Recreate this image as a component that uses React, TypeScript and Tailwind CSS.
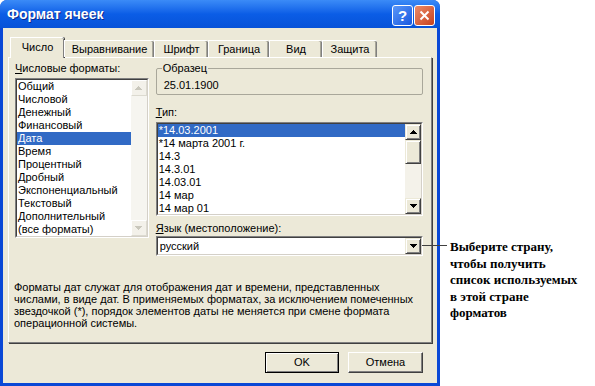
import React from "react";

const sans = "[font-family:'Liberation_Sans',Arial,sans-serif]";

function Arrow({ dir, color = "#000" }: { dir: "up" | "down"; color?: string }) {
  return (
    <svg width="7" height="4" viewBox="0 0 7 4" shapeRendering="crispEdges">
      <path d={dir === "up" ? "M3 0h1v1h1v1h1v1h1v1H0V3h1V2h1V1h1z" : "M0 0h7v1H6v1H5v1H4v1H3V3H2V2H1V1H0z"} fill={color} />
    </svg>
  );
}

function ScrollBtn({ dir }: { dir: "up" | "down" }) {
  return (
    <div className="flex h-[16px] w-[16px] items-center justify-center border border-t-[#ECE9D8] border-l-[#ECE9D8] border-r-[#404040] border-b-[#404040] bg-[#ECE9D8] shadow-[inset_1px_1px_0_white,inset_-1px_-1px_0_#808080]">
      <Arrow dir={dir} />
    </div>
  );
}

function DisabledBtn({ dir }: { dir: "up" | "down" }) {
  return (
    <div className="flex h-[16px] w-[16px] items-center justify-center border border-t-white border-l-white border-r-[#DCDAD0] border-b-[#DCDAD0] bg-[#F3F1EA]">
      <Arrow dir={dir} color="#C9C7BC" />
    </div>
  );
}

const formats = [
  "Общий",
  "Числовой",
  "Денежный",
  "Финансовый",
  "Дата",
  "Время",
  "Процентный",
  "Дробный",
  "Экспоненциальный",
  "Текстовый",
  "Дополнительный",
  "(все форматы)",
];

const types = ["*14.03.2001", "*14 марта 2001 г.", "14.3", "14.3.01", "14.03.01", "14 мар", "14 мар 01"];

const tabs = [
  { label: "Число", w: "w-[54px]", active: true },
  { label: "Выравнивание", w: "w-[90px]", active: false },
  { label: "Шрифт", w: "w-[54px]", active: false },
  { label: "Граница", w: "w-[61px]", active: false },
  { label: "Вид", w: "w-[53px]", active: false },
  { label: "Защита", w: "w-[55px]", active: false },
];

export default function App() {
  return (
    <div className={`flex h-[386px] w-[595px] bg-white text-black ${sans}`}>
      {/* dialog window */}
      <div className="flex h-[386px] w-[440px] shrink-0 flex-col rounded-t-[7px] bg-[#0A48D6]">
        <div className="flex h-[28px] items-center rounded-t-[7px] bg-linear-to-b from-[#3B8BF7] via-[#0B5DE6] to-[#0752D8] pl-[7px] pr-[5px]">
          <span className="flex-1 text-[14px] font-bold text-white [text-shadow:1px_1px_0_#0B2A8F]">Формат ячеек</span>
          <div className="mt-[2px] flex gap-[1px]">
            <div className="flex h-[21px] w-[21px] items-center justify-center rounded-[3px] border border-white bg-linear-to-br from-[#5A97F8] to-[#1756DF] text-[15px] font-bold leading-none text-white">
              ?
            </div>
            <div className="flex h-[21px] w-[21px] items-center justify-center rounded-[3px] border border-white bg-linear-to-br from-[#EC8A66] to-[#C6401C]">
              <svg width="11" height="11" viewBox="0 0 11 11">
                <path d="M1.5 1.5l8 8M9.5 1.5l-8 8" stroke="white" strokeWidth="2" />
              </svg>
            </div>
          </div>
        </div>

        <div className="mx-[3px] mb-[3px] flex flex-1 flex-col bg-[#ECE9D8] pt-[9px]">
          {/* tabs */}
          <div className="relative z-10 flex h-[20px] items-end pl-[7px] text-[11px]">
            {tabs.map((t) =>
              t.active ? (
                <div
                  key={t.label}
                  className={`${t.w} mb-[-1px] flex h-[21px] items-center justify-center rounded-tr-[2px] border-l border-t border-white bg-[#ECE9D8] pb-[1px] shadow-[inset_-1px_0_0_#808080,1px_0_0_#404040]`}
                >
                  {t.label}
                </div>
              ) : (
                <div
                  key={t.label}
                  className={`${t.w} flex h-[17px] items-center justify-center rounded-tr-[2px] border-l border-t border-white bg-[#ECE9D8] shadow-[inset_-1px_0_0_#808080,inset_-2px_0_0_#A8A699]`}
                >
                  {t.label}
                </div>
              )
            )}
          </div>

          {/* panel */}
          <div className="mx-[5px] flex h-[286px] flex-col border border-b-[#808080] border-l-white border-r-[#808080] border-t-white pl-[6px] pr-[8px] pt-[4px] text-[11px] shadow-[1px_1px_0_#404040]">
            <div className="flex gap-[7px]">
              <div className="flex w-[134px] flex-col">
                <div className="h-[13px] leading-[13px]">
                  <u>Ч</u>исловые форматы:
                </div>
                <div className="mt-[3px] h-[160px] border border-b-white border-l-[#808080] border-r-white border-t-[#808080]">
                  <div className="flex h-full border border-b-[#D4D0C8] border-l-[#404040] border-r-[#D4D0C8] border-t-[#404040] bg-white">
                    <div className="flex flex-1 flex-col">
                      {formats.map((f) => (
                        <div
                          key={f}
                          className={
                            f === "Дата"
                              ? "h-[13px] whitespace-nowrap bg-[#316AC5] pl-[1px] leading-[13px] text-white"
                              : "h-[13px] whitespace-nowrap pl-[1px] leading-[13px]"
                          }
                        >
                          {f}
                        </div>
                      ))}
                    </div>
                    <div className="flex w-[16px] flex-col bg-[#F6F5F0]">
                      <DisabledBtn dir="up" />
                      <div className="flex-1" />
                      <DisabledBtn dir="down" />
                    </div>
                  </div>
                </div>
              </div>

              <div className="flex w-[268px] flex-col">
                <fieldset className="rounded-[2px] border border-[#A9A79A] pb-[2px]">
                  <legend className="ml-[5px] px-[1px] leading-[13px]">Образец</legend>
                  <div className="pl-[7px] pt-[4px] leading-[13px]">25.01.1900</div>
                </fieldset>

                <div className="mt-[11px] h-[13px] leading-[13px]">
                  <u>Т</u>ип:
                </div>
                <div className="mt-[3px] h-[94px] border border-b-white border-l-[#808080] border-r-white border-t-[#808080]">
                  <div className="flex h-full border border-b-[#D4D0C8] border-l-[#404040] border-r-[#D4D0C8] border-t-[#404040] bg-white">
                    <div className="flex flex-1 flex-col overflow-hidden">
                      {types.map((t, i) => (
                        <div
                          key={t}
                          className={
                            i === 0
                              ? "h-[13px] shrink-0 whitespace-nowrap bg-[#316AC5] pl-[1px] leading-[13px] text-white"
                              : "h-[13px] shrink-0 whitespace-nowrap pl-[1px] leading-[13px]"
                          }
                        >
                          {t}
                        </div>
                      ))}
                    </div>
                    <div className="flex w-[16px] flex-col bg-[#F4F2EA]">
                      <ScrollBtn dir="up" />
                      <div className="h-[24px] border border-b-[#404040] border-l-[#ECE9D8] border-r-[#404040] border-t-[#ECE9D8] bg-[#ECE9D8] shadow-[inset_1px_1px_0_white,inset_-1px_-1px_0_#808080]" />
                      <div className="flex-1" />
                      <ScrollBtn dir="down" />
                    </div>
                  </div>
                </div>

                <div className="mt-[6px] h-[13px] leading-[13px]">
                  <u>Я</u>зык (местоположение):
                </div>
                <div className="relative mt-[1px] h-[20px] border border-b-white border-l-[#808080] border-r-white border-t-[#808080]">
                  <div className="flex h-full items-center border border-b-[#D4D0C8] border-l-[#404040] border-r-[#D4D0C8] border-t-[#404040] bg-white">
                    <span className="flex-1 pl-[2px]">русский</span>
                    <ScrollBtn dir="down" />
                  </div>
                  <div className="absolute left-full top-[8px] h-px w-[25px] bg-[#404040]" />
                </div>
              </div>
            </div>

            <p className="ml-[-1px] mt-[25px] leading-[12px]">
              Форматы дат служат для отображения дат и времени, представленных
              <br />
              числами, в виде дат. В применяемых форматах, за исключением помеченных
              <br />
              звездочкой (*), порядок элементов даты не меняется при смене формата
              <br />
              операционной системы.
            </p>
          </div>

          {/* buttons */}
          <div className="mt-[9px] flex justify-end gap-[9px] pr-[14px] text-[11px]">
            <button className="flex h-[21px] w-[74px] items-center justify-center border border-black bg-[#ECE9D8] shadow-[inset_1px_1px_0_white,inset_-1px_-1px_0_#808080]">
              OK
            </button>
            <button className="flex h-[21px] w-[75px] items-center justify-center border border-b-[#404040] border-l-white border-r-[#404040] border-t-white bg-[#ECE9D8] shadow-[inset_-1px_-1px_0_#808080]">
              Отмена
            </button>
          </div>
        </div>
      </div>

      {/* callout */}
      <div className="pl-[10px] pt-[239px] text-[13px] font-bold leading-[16.5px] [font-family:'Liberation_Serif','Times_New_Roman',serif]">
        <div>Выберите страну,</div>
        <div>чтобы получить</div>
        <div>список используемых</div>
        <div>в этой стране</div>
        <div>форматов</div>
      </div>
    </div>
  );
}
